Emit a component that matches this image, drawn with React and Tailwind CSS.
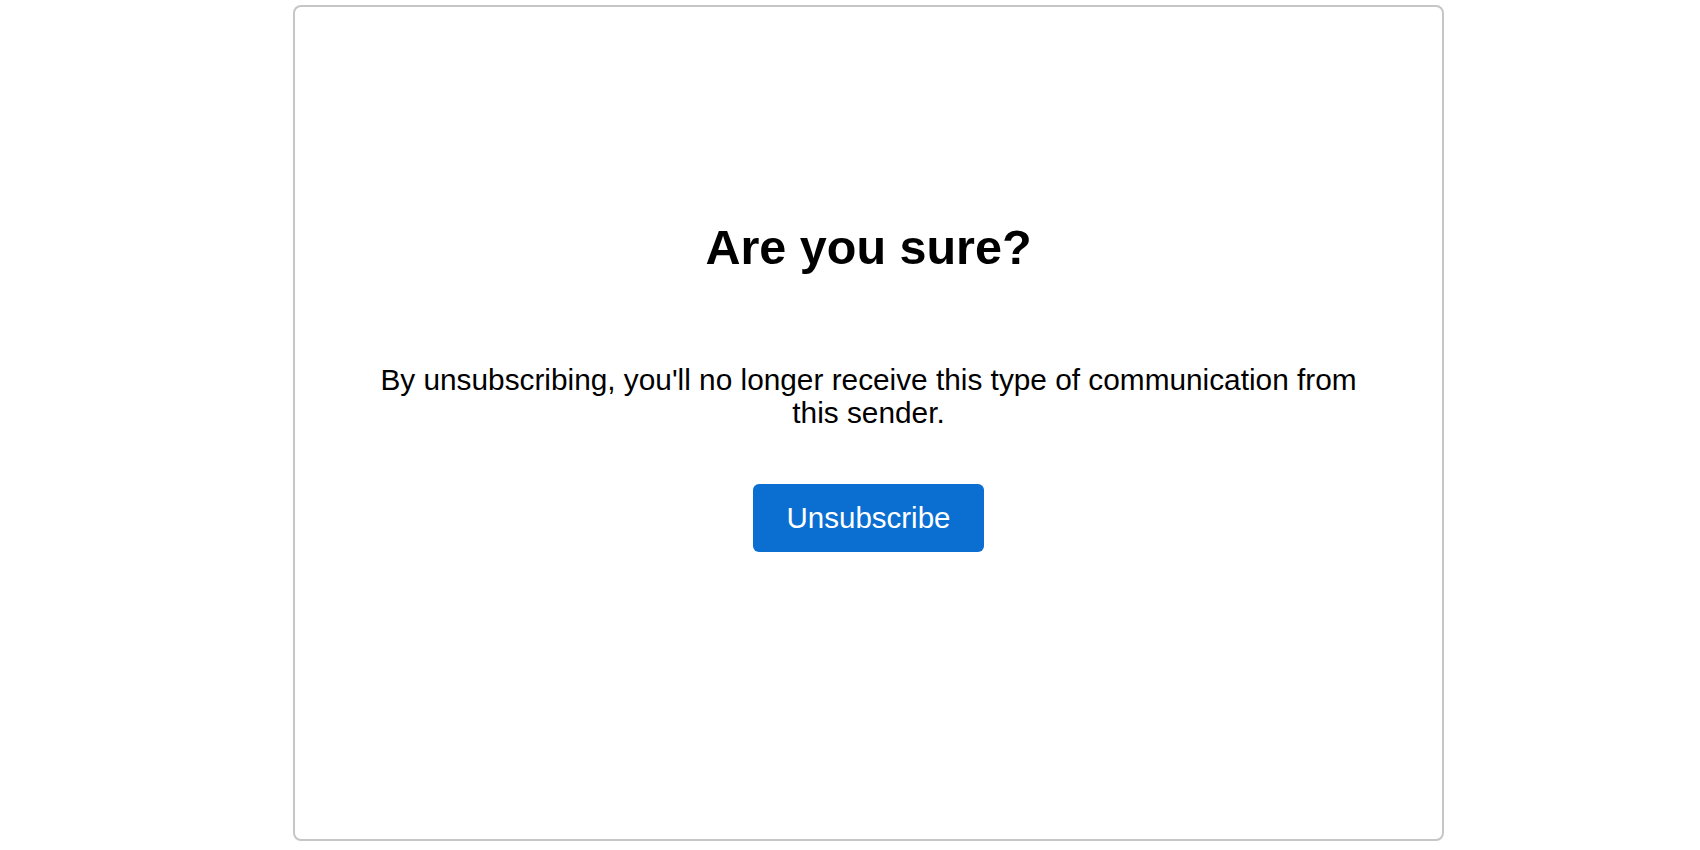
export default function App() {
  return (
    <div className="min-h-screen w-full bg-white font-['Liberation_Sans',Arial,sans-serif] text-black">
      <div className="ml-[293px] mt-[5px] h-[836px] w-[1151px] rounded-[8px] border-2 border-[#c6c6c6] bg-white">
        <div className="flex flex-col items-center pt-[213px] text-center">
          <h1 className="text-[48.5px] font-bold leading-[1.15]">Are you sure?</h1>

          <p className="mt-[87px] max-w-[1000px] text-[29.8px] leading-[1.12]">
            By unsubscribing, you'll no longer receive this type of communication from this sender.
          </p>

          <button className="mt-[55px] rounded-[6px] bg-[#0b6fd1] px-[34px] py-[17px] text-[29.5px] leading-[1.15] text-white">
            Unsubscribe
          </button>
        </div>
      </div>
    </div>
  );
}
